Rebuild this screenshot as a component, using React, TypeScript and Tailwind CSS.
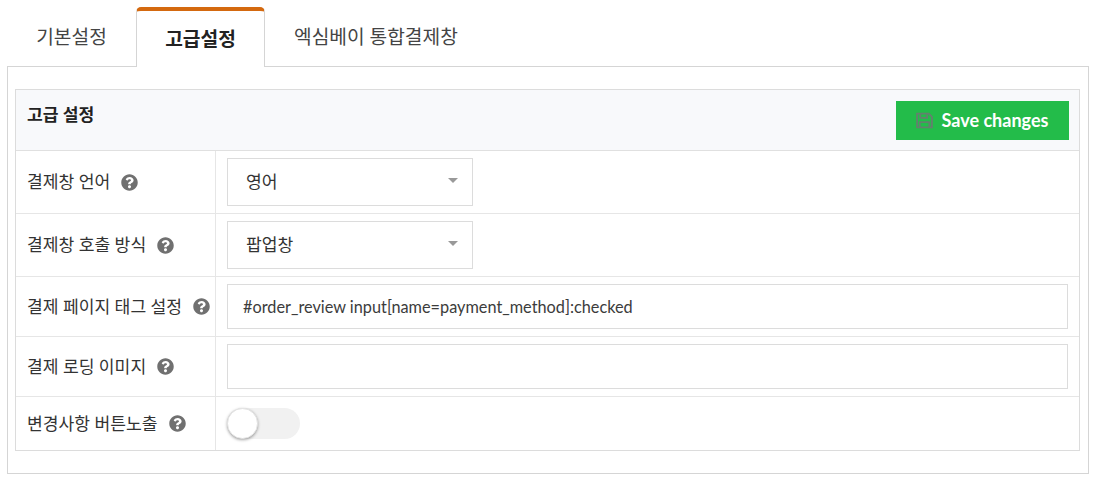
import React from "react";

const fontStack = "font-['Lato','Noto_Sans_CJK_KR',sans-serif]";

const Help = () => (
	<svg viewBox="0 0 512 512" className="size-[17px] shrink-0" fill="#707070">
		<path d="M504 256c0 137-111 248-248 248S8 393 8 256 119 8 256 8s248 111 248 248zM262.700 90c-54.500 0-89.300 23-116.500 63.800-3.500 5.300-2.400 12.400 2.700 16.300l34.700 26.300c5.200 3.900 12.600 3 16.700-2.100 17.900-22.700 30.100-35.800 57.300-35.800 20.400 0 45.700 13.100 45.700 33 0 15-12.400 22.700-32.600 34-23.600 13.200-54.800 29.700-54.800 70.900V300c0 6.600 5.400 12 12 12h56c6.600 0 12-5.400 12-12v-1.300c0-28.600 83.500-29.800 83.500-107.100C379.400 133.400 319 90 262.700 90zM256 339c-25.500 0-46.200 20.700-46.200 46.200 0 25.500 20.700 46.200 46.200 46.200s46.200-20.700 46.200-46.200c0-25.500-20.700-46.200-46.200-46.200z" />
	</svg>
);

const Row = ({
	label,
	className,
	children,
}: {
	label: string;
	className: string;
	children: React.ReactNode;
}) => (
	<div className={`flex border-b border-[#e6e6e6] last:border-b-0 ${className}`}>
		<div className="w-[200px] shrink-0 border-r border-[#e6e6e6] pl-[11px] flex items-center gap-[11px]">
			<span className="text-[17.15px] leading-[24px] text-[#333] whitespace-nowrap">{label}</span>
			<Help />
		</div>
		<div className="flex-1 flex items-center pl-[11px] pr-[11px]">{children}</div>
	</div>
);

const SelectBox = ({ value }: { value: string }) => (
	<div className="w-[246px] h-[48px] border border-[#dcdcdc] bg-white flex items-center justify-between pl-[18px] pr-[14px]">
		<span className="text-[17.15px] text-[#333] -mt-[1px]">{value}</span>
		<span className="w-0 h-0 -mt-[3px] border-x-[5px] border-x-transparent border-t-[5px] border-t-[#999]" />
	</div>
);

const TextBox = ({ value }: { value?: string }) => (
	<div className="w-full h-[45px] border border-[#dcdcdc] bg-white flex items-center px-[15px] pt-[1px]">
		<span className="text-[16.3px] text-[#3c3c3c] whitespace-nowrap">{value}</span>
	</div>
);

export default function App() {
	return (
		<div className={`w-[1094px] h-[481px] bg-white pt-[7px] px-[7px] ${fontStack}`}>
			<div className="flex h-[59px] w-[1082px]">
				<div className="w-[129px] flex items-center justify-center pt-[1px] text-[19.2px] text-[#444]">기본설정</div>
				<div className="relative z-10 w-[129px] -ml-0 h-[60px] bg-white border-x border-[#d5d5d5] border-t-[4px] border-t-[#d4690f] rounded-t-[5px] flex items-center justify-center text-[19.2px] font-bold text-[#222]">
					고급설정
				</div>
				<div className="pl-[29px] flex items-center pt-[1px] text-[19.2px] text-[#444]">엑심베이 통합결제창</div>
			</div>
			<div className="w-[1082px] h-[408px] border border-[#d5d5d5] pt-[22px] px-[7px]">
				<div className="w-[1065px] h-[362px] border border-[#dcdcdc]">
					<div className="h-[61px] bg-[#f8f9fb] border-b border-[#e0e0e0] flex justify-between pl-[11px] pr-[10px] pt-[11px]">
						<span className="text-[17.15px] leading-[28px] font-bold text-[#222]">고급 설정</span>
						<button className="w-[173px] h-[39px] bg-[#23bc4a] flex items-center justify-center gap-[9px] pr-[1px]">
							<svg viewBox="0 0 16 16" className="size-[17px]" fill="none" stroke="#64806e" strokeWidth="1.7">
								<path d="M1 1.500h11l3 3v10H1z" />
								<path d="M4 2v3.500h6.500V2M3.500 14.500V9.500h9v5" />
							</svg>
							<span className="text-[18px] font-bold text-white">Save changes</span>
						</button>
					</div>
					<Row label="결제창 언어" className="h-[63px]">
						<SelectBox value="영어" />
					</Row>
					<Row label="결제창 호출 방식" className="h-[63px]">
						<SelectBox value="팝업창" />
					</Row>
					<Row label="결제 페이지 태그 설정" className="h-[60px]">
						<TextBox value="#order_review input[name=payment_method]:checked" />
					</Row>
					<Row label="결제 로딩 이미지" className="h-[60px]">
						<TextBox />
					</Row>
					<Row label="변경사항 버튼노출" className="h-[53px]">
						<div className="relative w-[73px] h-[31px] rounded-full bg-[#f1f1f1]">
							<div className="absolute left-0 top-0 size-[31px] rounded-full bg-white border border-[#e4e4e4] shadow-[0_1px_3px_rgba(0,0,0,0.35)]" />
						</div>
					</Row>
				</div>
			</div>
		</div>
	);
}
